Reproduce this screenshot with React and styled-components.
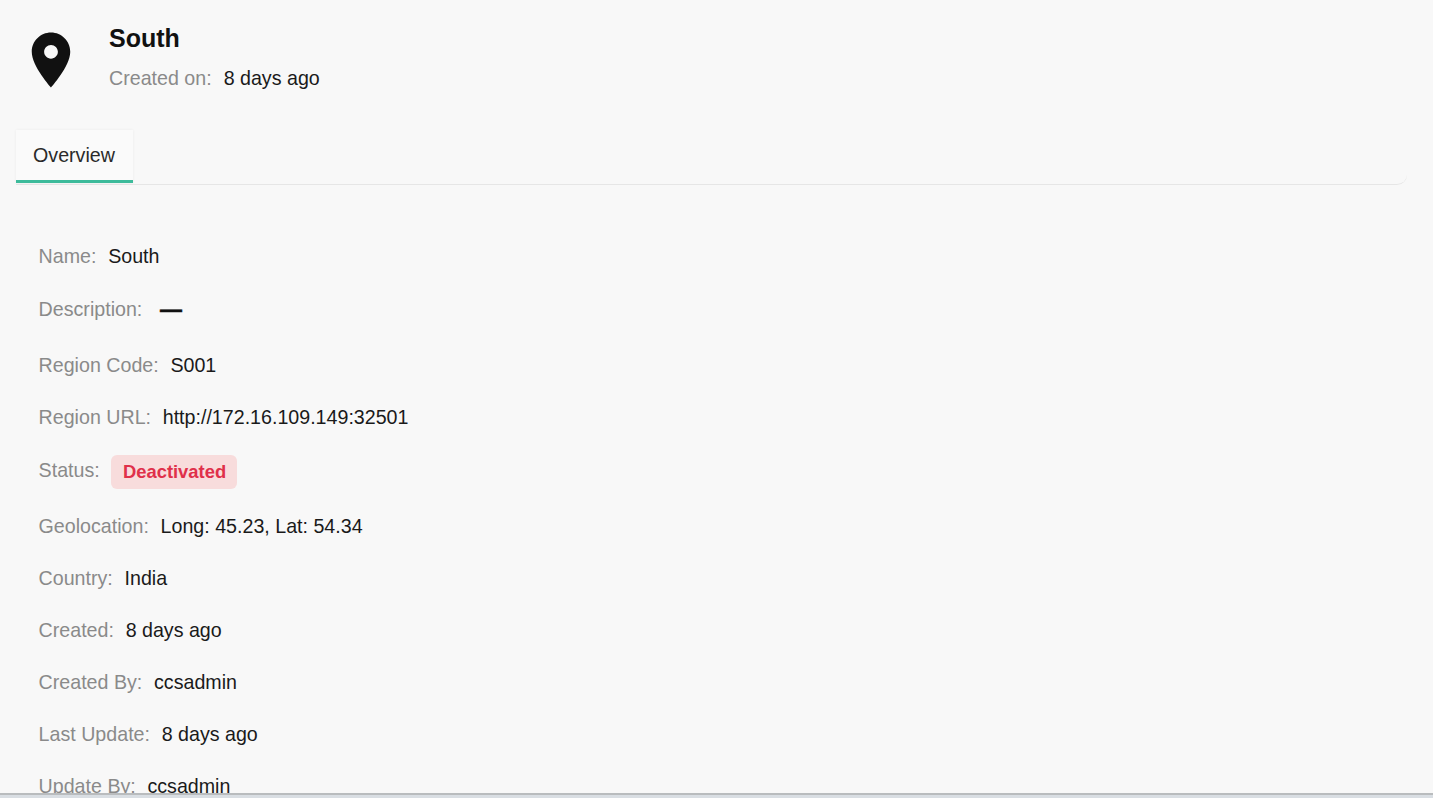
import styled, { createGlobalStyle } from "styled-components";

const GlobalStyle = createGlobalStyle`
  html, body {
    margin: 0;
    padding: 0;
    height: 100%;
    overflow: hidden;
    background: #d9dee3;
    font-family: "Liberation Sans", Arial, sans-serif;
  }
`;

// field rows of the overview tab
const fields = [
  { label: "Name:", value: "South" },
  { label: "Description:", value: "—", dash: true },
  { label: "Region Code:", value: "S001" },
  { label: "Region URL:", value: "http://172.16.109.149:32501" },
  { label: "Status:", value: "Deactivated", badge: true },
  { label: "Geolocation:", value: "Long: 45.23, Lat: 54.34" },
  { label: "Country:", value: "India" },
  { label: "Created:", value: "8 days ago" },
  { label: "Created By:", value: "ccsadmin" },
  { label: "Last Update:", value: "8 days ago" },
  { label: "Update By:", value: "ccsadmin" },
];

const PinIcon = () => (
  <svg width="66" height="66" viewBox="0 0 24 24" fill="#111">
    <path d="M12 2C8.13 2 5 5.13 5 9c0 5.25 7 13 7 13s7-7.75 7-13c0-3.87-3.13-7-7-7zm0 9.5c-1.38 0-2.5-1.12-2.5-2.5s1.12-2.5 2.5-2.5 2.5 1.12 2.5 2.5-1.12 2.5-2.5 2.5z" />
  </svg>
);

const App = () => {
  return (
    <Page>
      <GlobalStyle />
      <Header>
        <PinBox>
          <PinIcon />
        </PinBox>
        <HeaderText>
          <Title>South</Title>
          <Subtitle>
            <Label>Created on:</Label>
            <Value>8 days ago</Value>
          </Subtitle>
        </HeaderText>
      </Header>
      <TabBar>
        <Tab>Overview</Tab>
      </TabBar>
      <Fields>
        {fields.map((f) => (
          <Row key={f.label} $tall={f.dash || f.badge}>
            <Label>{f.label}</Label>
            {f.badge ? (
              <Badge>{f.value}</Badge>
            ) : f.dash ? (
              <Dash>{f.value}</Dash>
            ) : (
              <Value>{f.value}</Value>
            )}
          </Row>
        ))}
      </Fields>
    </Page>
  );
};

export default App;

const Page = styled.div`
  height: 795px;
  box-sizing: border-box;
  overflow: hidden;
  background: #f8f8f8;
  border-bottom: 2px solid #b9bcbe;
`;

const Header = styled.div`
  display: flex;
  align-items: flex-start;
  height: 130px;
  padding: 18px 0 0 18px;
  box-sizing: border-box;
`;

const PinBox = styled.div`
  width: 91px;
  padding-top: 9px;
`;

const HeaderText = styled.div`
  display: flex;
  flex-direction: column;
`;

const Title = styled.div`
  font-size: 25px;
  line-height: 40px;
  font-weight: 700;
  color: #111;
`;

const Subtitle = styled.div`
  display: flex;
  gap: 12px;
  font-size: 19.65px;
  line-height: 40px;
`;

const TabBar = styled.div`
  display: flex;
  margin: 0 26px 0 16px;
  height: 55px;
  box-sizing: border-box;
  border-bottom: 1px solid #e6e6e6;
  border-bottom-right-radius: 10px;
`;

const Tab = styled.div`
  width: 117px;
  height: 53px;
  box-sizing: border-box;
  display: flex;
  align-items: center;
  justify-content: center;
  padding-right: 1px;
  background: #fafafa;
  border-bottom: 3px solid #3dbb9b;
  font-size: 19.65px;
  color: #2a2a2a;
  box-shadow: 0 0 3px rgba(0, 0, 0, 0.06);
`;

const Fields = styled.div`
  display: flex;
  flex-direction: column;
  padding: 60px 0 0 38.6px;
`;

const Row = styled.div`
  display: flex;
  align-items: flex-start;
  gap: 11.7px;
  box-sizing: border-box;
  height: ${(p) => (p.$tall ? "57px" : "52px")};
  padding-top: ${(p) => (p.$tall ? "1px" : "0")};
  font-size: 19.65px;
  line-height: 22px;
`;

const Label = styled.span`
  color: #8a8a8a;
`;

const Value = styled.span`
  color: #1a1a1a;
`;

const Dash = styled.span`
  color: #111;
  font-size: 22px;
  line-height: 24px;
  font-weight: 700;
  margin-left: 6px;
  -webkit-text-stroke: 0.4px #111;
`;

const Badge = styled.span`
  display: inline-flex;
  align-items: center;
  height: 34px;
  margin-top: -4px;
  padding: 0 11px 0 11.5px;
  border-radius: 6px;
  background: #f8dcdc;
  color: #e0304a;
  font-size: 18.4px;
  font-weight: 700;
`;
